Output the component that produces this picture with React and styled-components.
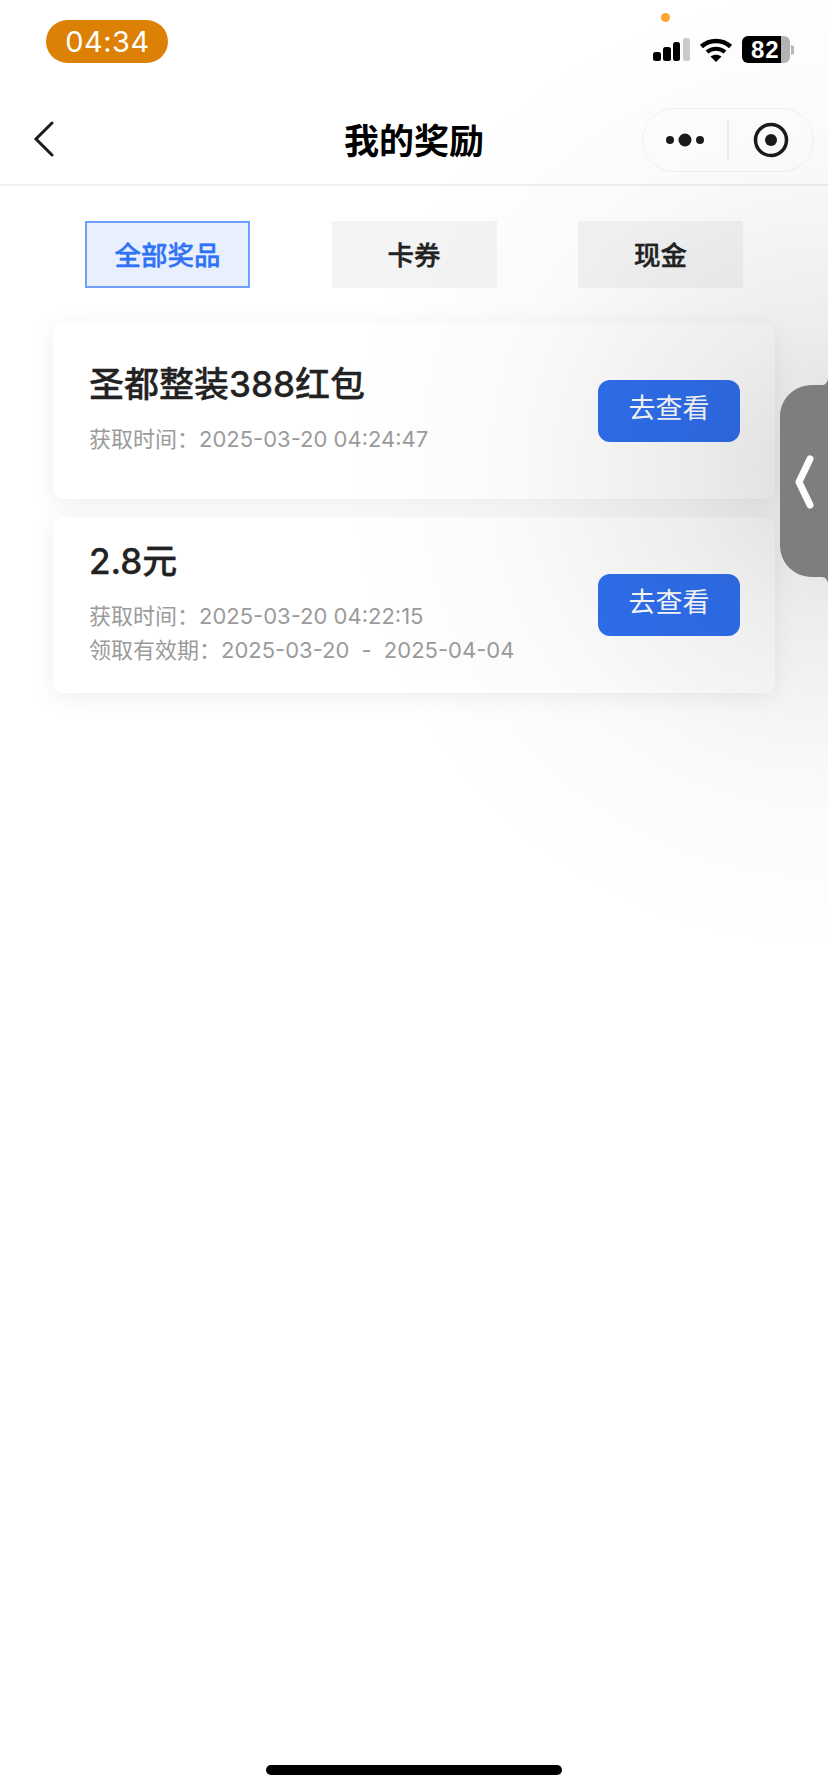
import React from "react";
import styled, { createGlobalStyle } from "styled-components";

const Global = createGlobalStyle`
  html, body {
    margin: 0;
    padding: 0;
    background: #fff;
  }
  * {
    box-sizing: border-box;
  }
`;

const Page = styled.div`
  position: relative;
  width: 828px;
  height: 1792px;
  overflow: hidden;
  background: #fff;
  font-family: Inter, "Noto Sans CJK SC", sans-serif;
  color: #222;
`;

const Glow = styled.div`
  position: absolute;
  inset: 0;
  pointer-events: none;
  background: radial-gradient(circle 490px at 828px 470px, rgba(0, 0, 0, 0.135) 0%, rgba(0, 0, 0, 0.07) 30%, rgba(0, 0, 0, 0.02) 65%, rgba(0, 0, 0, 0) 100%);
`;

const StatusBar = styled.div`
  height: 92px;
  padding: 20px 34px 0 46px;
  display: flex;
  justify-content: space-between;
  align-items: flex-start;
`;

const TimePill = styled.div`
  width: 122px;
  height: 43px;
  padding-left: 1px;
  border-radius: 22px;
  background: #dc8106;
  color: #fff;
  font-size: 29px;
  font-weight: 400;
  letter-spacing: 0.5px;
  display: flex;
  align-items: center;
  justify-content: center;
`;

const StatusIcons = styled.div`
  display: flex;
  align-items: center;
  gap: 10px;
  margin-top: 16px;
`;

const MicDot = styled.div`
  position: absolute;
  left: 661px;
  top: 13px;
  width: 9px;
  height: 9px;
  border-radius: 50%;
  background: #ffa433;
`;

const Battery = styled.div`
  position: relative;
  width: 48px;
  height: 27px;
  border-radius: 6px;
  overflow: hidden;
  background: linear-gradient(90deg, #000 82%, #b4b4b4 82%);
  color: #fff;
  font-size: 24px;
  font-weight: 700;
  line-height: 27px;
  letter-spacing: 1px;
  padding-left: 9px;
  font-family: "Liberation Sans", sans-serif;
`;

const BatteryCap = styled.div`
  width: 3px;
  height: 10px;
  margin-left: -9px;
  border-radius: 0 3px 3px 0;
  background: #b8b8b8;
`;

const NavBar = styled.div`
  position: relative;
  height: 94px;
  border-bottom: 2px solid #efefef;
  display: flex;
  align-items: center;
  justify-content: center;
`;

const BackIcon = styled.svg`
  position: absolute;
  left: 33px;
  top: 29px;
`;

const Title = styled.h1`
  margin: 0;
  font-size: 35px;
  font-weight: 700;
  color: #000;
`;

const Capsule = styled.div`
  position: absolute;
  right: 14px;
  top: 16px;
  width: 172px;
  height: 64px;
  border: 1px solid #f3f3f3;
  border-radius: 32px;
  display: flex;
  align-items: center;
`;

const CapsulePart = styled.div`
  flex: 1;
  height: 40px;
  display: flex;
  align-items: center;
  justify-content: center;
  & + & {
    border-left: 2px solid #ececec;
  }
`;

const Tabs = styled.div`
  display: flex;
  justify-content: space-between;
  padding: 35px 85px 0;
`;

const Tab = styled.div`
  width: 165px;
  height: 67px;
  padding-bottom: 2px;
  display: flex;
  align-items: center;
  justify-content: center;
  font-size: 26.5px;
  font-weight: 500;
  -webkit-text-stroke: 0.4px currentColor;
  color: ${(p) => (p.$active ? "#3072f6" : "#222")};
  background: ${(p) => (p.$active ? "#e8f0fe" : "#f4f4f4")};
  border: ${(p) => (p.$active ? "2px solid #6f9ffa" : "none")};
`;

const List = styled.div`
  display: flex;
  flex-direction: column;
  gap: 18px;
  padding: 35px 53px 0;
`;

const Card = styled.div`
  height: 176px;
  padding: 0 35px 0 36px;
  border-radius: 10px;
  background: #fff;
  box-shadow: 0 4px 24px rgba(0, 0, 0, 0.07);
  display: flex;
  align-items: center;
  justify-content: space-between;
`;

const CardTitle = styled.div`
  font-size: 35px;
  font-weight: 500;
  -webkit-text-stroke: 0.3px currentColor;
  line-height: 38px;
  margin: -1px 0 19px;
  color: #222;
`;

const CardLine = styled.div`
  font-size: 22px;
  line-height: 34px;
  color: #9b9b9b;
`;

const RangeDash = styled.span`
  padding: 0 6px;
`;

const ViewButton = styled.button`
  width: 142px;
  height: 62px;
  border: none;
  border-radius: 12px;
  background: #2f6fef;
  color: #fff;
  font-family: inherit;
  font-size: 27px;
  padding: 0 0 9px;
`;

const HomeBar = styled.div`
  position: absolute;
  left: 266px;
  bottom: 17px;
  width: 296px;
  height: 10px;
  border-radius: 5px;
  background: #000;
`;

const Handle = styled.svg`
  position: absolute;
  right: 0;
  top: 370px;
`;

const App = () => (
  <Page>
    <Global />
    <StatusBar>
      <TimePill>04:34</TimePill>
      <MicDot />
      <StatusIcons>
        <svg width="37" height="23" viewBox="0 0 37 23">
          <rect x="0" y="14" width="8" height="9" rx="2.5" fill="#000" />
          <rect x="10" y="9" width="8" height="14" rx="2.5" fill="#000" />
          <rect x="20" y="4" width="7" height="19" rx="2.5" fill="#000" />
          <rect x="30" y="0" width="7" height="23" rx="2.5" fill="#ccc" />
        </svg>
        <svg width="32" height="24" viewBox="0 0 32 24">
          <path d="M1.500 8.500C9.500 1 22.500 1 30.500 8.500" fill="none" stroke="#000" strokeWidth="4.500" />
          <path d="M7 14c5-4.500 13-4.500 18 0" fill="none" stroke="#000" strokeWidth="4" />
          <path d="M10.500 18.500c3.500-2.500 7.500-2.500 11 0L16 24z" fill="#000" />
        </svg>
        <Battery>82</Battery>
        <BatteryCap />
      </StatusIcons>
    </StatusBar>
    <NavBar>
      <BackIcon width="22" height="36" viewBox="0 0 22 36">
        <path d="M19 2L3 18l16 16" fill="none" stroke="#1a1a1a" strokeWidth="3" strokeLinecap="round" />
      </BackIcon>
      <Title>我的奖励</Title>
      <Capsule>
        <CapsulePart>
          <svg width="38" height="14" viewBox="0 0 38 14">
            <circle cx="4" cy="7" r="4" fill="#1a1a1a" />
            <circle cx="19" cy="7" r="6.500" fill="#1a1a1a" />
            <circle cx="34" cy="7" r="4" fill="#1a1a1a" />
          </svg>
        </CapsulePart>
        <CapsulePart>
          <svg width="36" height="36" viewBox="0 0 36 36">
            <circle cx="18" cy="18" r="15.500" fill="none" stroke="#1a1a1a" strokeWidth="3.500" />
            <circle cx="18" cy="18" r="6" fill="#1a1a1a" />
          </svg>
        </CapsulePart>
      </Capsule>
    </NavBar>
    <Tabs>
      <Tab $active>全部奖品</Tab>
      <Tab>卡券</Tab>
      <Tab>现金</Tab>
    </Tabs>
    <List>
      <Card>
        <div>
          <CardTitle>圣都整装388红包</CardTitle>
          <CardLine>获取时间：2025-03-20 04:24:47</CardLine>
        </div>
        <ViewButton>去查看</ViewButton>
      </Card>
      <Card>
        <div>
          <CardTitle>2.8元</CardTitle>
          <CardLine>获取时间：2025-03-20 04:22:15</CardLine>
          <CardLine>领取有效期：2025-03-20 <RangeDash>-</RangeDash> 2025-04-04</CardLine>
        </div>
        <ViewButton>去查看</ViewButton>
      </Card>
    </List>
    <Glow />
    <Handle width="48" height="222" viewBox="0 0 48 222">
      <path d="M48 9c-1 4-3 6-6 6H32C14 15 0 29 0 47v128c0 18 14 32 32 32h10c3 0 5 2 6 6z" fill="#7e7e7e" />
      <path d="M30 89L19 112l11 23" fill="none" stroke="#fff" strokeWidth="7" strokeLinecap="round" strokeLinejoin="round" />
    </Handle>
    <HomeBar />
  </Page>
);

export default App;
